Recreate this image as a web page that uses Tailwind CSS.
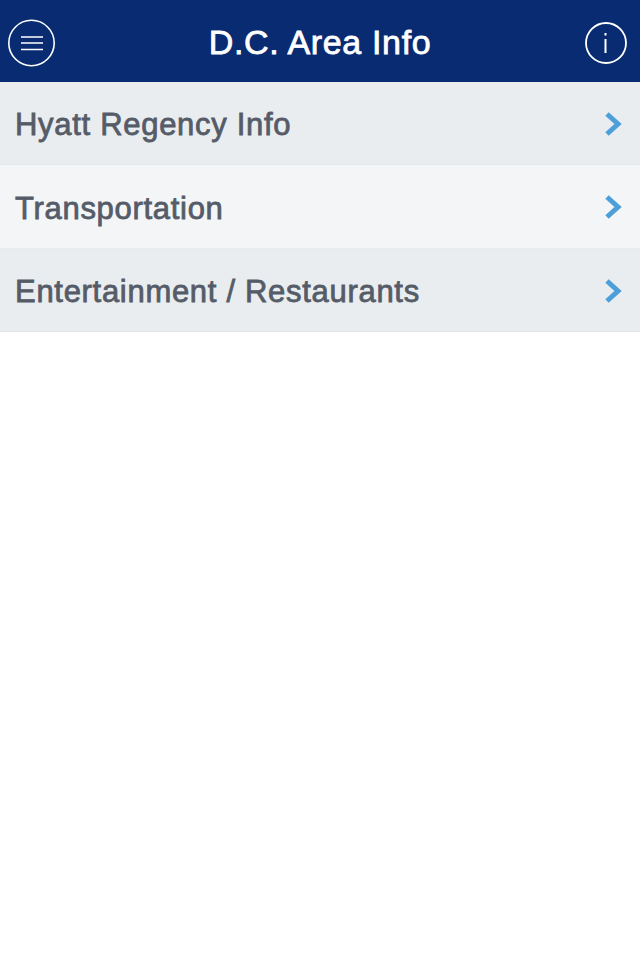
<!DOCTYPE html>
<html><head><script src="https://cdn.jsdelivr.net/npm/@tailwindcss/browser@4"></script></head>
<body class="bg-white font-['Liberation_Sans',sans-serif]">
<div class="w-[640px] h-[960px] bg-white">
<header class="h-[82px] bg-[#092b72] flex items-center justify-between pl-2 pr-[13px] pt-[4px] relative">
<svg width="47" height="48" viewBox="0 0 47 48" fill="none" stroke="white"><circle cx="23.5" cy="24" r="22.7" stroke-width="1.6"/><path d="M13 18H35M13 24H35M13 30.5H35" stroke-width="1.7"/></svg>
<h1 class="absolute left-0 right-0 top-[25px] text-center text-white text-[34px] tracking-[0.65px] leading-none [-webkit-text-stroke:0.8px_white]">D.C. Area Info</h1>
<svg width="42" height="42" viewBox="0 0 42 42" fill="none" stroke="white"><circle cx="21" cy="21" r="20" stroke-width="1.8"/><path d="M20.5 17V31" stroke-width="2"/><path d="M20.5 11V13.5" stroke-width="2"/></svg>
</header>
<div class="h-[83px] bg-[#e9edf0] border-b border-[#e3e6e9] flex items-center justify-between pl-[15px] pr-[18px]"><span class="pt-[5px] text-[31px] tracking-[0.7px] text-[#555c68] [-webkit-text-stroke:0.8px_#555c68]">Hyatt Regency Info</span><svg class="mt-[1px]" width="18" height="24" viewBox="0 0 18 24" fill="none" stroke="#4d9fd9" stroke-width="5"><path d="M3 2L14 12L3 22"/></svg></div>
<div class="h-[84px] bg-[#f3f5f7] border-b border-[#e8ebee] flex items-center justify-between pl-[15px] pr-[18px]"><span class="pt-[5px] text-[31px] tracking-[0.7px] text-[#555c68] [-webkit-text-stroke:0.8px_#555c68]">Transportation</span><svg class="mt-[1px]" width="18" height="24" viewBox="0 0 18 24" fill="none" stroke="#4d9fd9" stroke-width="5"><path d="M3 2L14 12L3 22"/></svg></div>
<div class="h-[83px] bg-[#e9edf0] border-b border-[#e3e6e9] flex items-center justify-between pl-[15px] pr-[18px]"><span class="pt-[5px] text-[31px] tracking-[0.7px] text-[#555c68] [-webkit-text-stroke:0.8px_#555c68]">Entertainment / Restaurants</span><svg class="mt-[1px]" width="18" height="24" viewBox="0 0 18 24" fill="none" stroke="#4d9fd9" stroke-width="5"><path d="M3 2L14 12L3 22"/></svg></div>
</div>
</body></html>
